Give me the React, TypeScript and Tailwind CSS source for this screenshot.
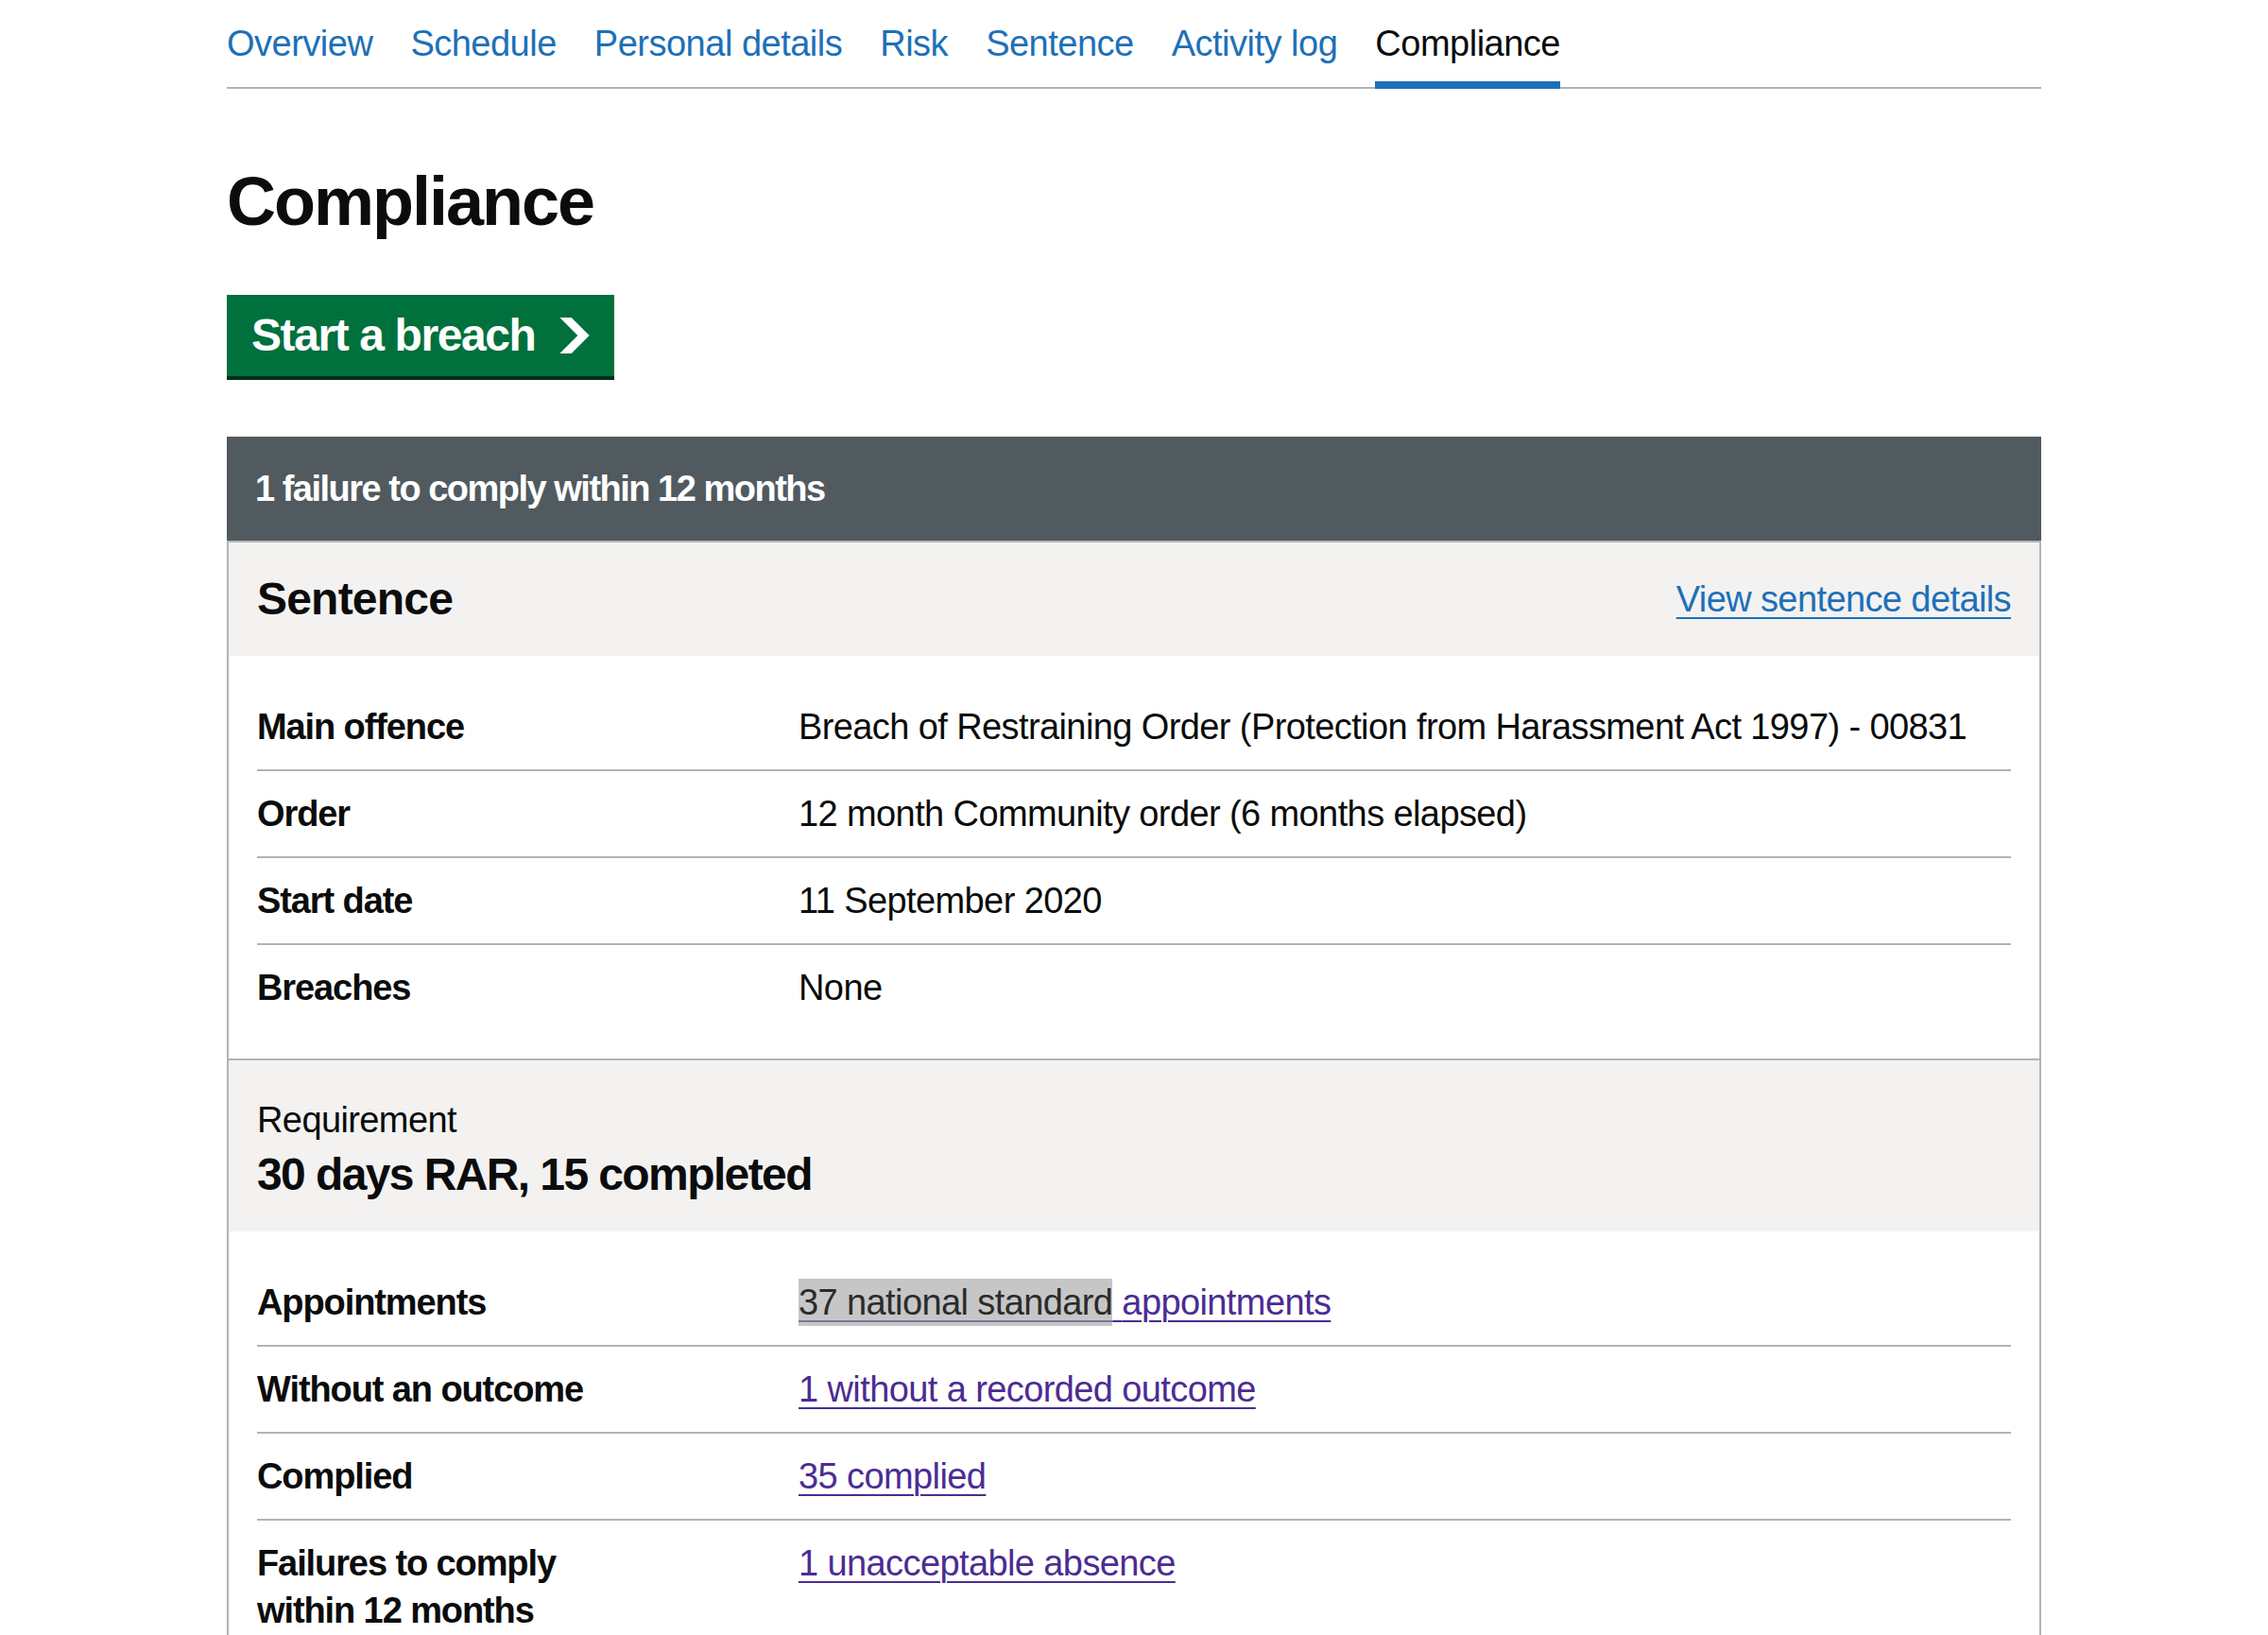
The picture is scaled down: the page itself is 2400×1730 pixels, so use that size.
import React from 'react';

type Row = { key: string; value: React.ReactNode };

const tabs = ['Overview', 'Schedule', 'Personal details', 'Risk', 'Sentence', 'Activity log', 'Compliance'];

const visited = 'text-[#4c2c92] underline decoration-2 underline-offset-[6px]';

function SummaryList({ rows }: { rows: Row[] }) {
  return (
    <dl>
      {rows.map((row, i) => (
        <div
          key={i}
          className={`grid grid-cols-[573px_1fr] py-[20px] ${i < rows.length - 1 ? 'border-b-2 border-[#b1b4b6]' : ''}`}
        >
          <dt className="font-bold tracking-[-1.1px] max-w-[400px]">{row.key}</dt>
          <dd className="tracking-[-0.6px]">{row.value}</dd>
        </div>
      ))}
    </dl>
  );
}

export default function App() {
  const sentenceRows: Row[] = [
    { key: 'Main offence', value: 'Breach of Restraining Order (Protection from Harassment Act 1997) - 00831' },
    { key: 'Order', value: '12 month Community order (6 months elapsed)' },
    { key: 'Start date', value: '11 September 2020' },
    { key: 'Breaches', value: 'None' },
  ];

  const requirementRows: Row[] = [
    {
      key: 'Appointments',
      value: (
        <a href="#" className={visited}>
          <span className="inline-block bg-[#c6c6c6] text-[#2b2b2b] underline decoration-2 underline-offset-[6px] decoration-[#7f74a3]">
            37 national standard
          </span>{' '}
          appointments
        </a>
      ),
    },
    { key: 'Without an outcome', value: <a href="#" className={visited}>1 without a recorded outcome</a> },
    { key: 'Complied', value: <a href="#" className={visited}>35 complied</a> },
    { key: 'Failures to comply within 12 months', value: <a href="#" className={visited}>1 unacceptable absence</a> },
  ];

  return (
    <div className="min-h-screen bg-white text-[#0b0c0c] font-['Liberation_Sans',Arial,sans-serif] text-[38px] leading-[50px]">
      <div className="w-[1920px] mx-auto pb-[80px]">
        {/* Sub navigation */}
        <nav>
          <ul className="flex gap-[40px] border-b-2 border-[#b1b4b6]">
            {tabs.map((tab) => {
              const active = tab === 'Compliance';
              return (
                <li key={tab} className="-mb-[2px]">
                  <a
                    href="#"
                    className={`block pt-[21px] pb-[15px] border-b-[8px] tracking-[-0.5px] ${
                      active ? 'border-[#1d70b8] text-[#0b0c0c]' : 'border-transparent text-[#1d70b8]'
                    }`}
                  >
                    {tab}
                  </a>
                </li>
              );
            })}
          </ul>
        </nav>

        <h1 className="mt-[79px] mb-[59px] text-[72px] leading-[80px] font-bold tracking-[-2px]">Compliance</h1>

        <div>
          <a
            href="#"
            className="inline-flex items-center gap-[25px] bg-[#00703c] text-white pl-[26px] pr-[26px] py-[19px] shadow-[0_4px_0_#002d18]"
          >
            <span className="text-[48px] leading-[48px] font-bold tracking-[-1.4px]">Start a breach</span>
            <svg width="32" height="38" viewBox="0 0 33 40" aria-hidden="true">
              <path fill="currentColor" d="M0 0h13l20 20-20 20H0l20-20z" />
            </svg>
          </a>
        </div>

        {/* Compliance card */}
        <section className="mt-[64px]">
          <div className="bg-[#505a5f] text-white font-bold px-[30px] py-[30px] border-b-2 border-[#b1b4b6] tracking-[-1.5px]">
            1 failure to comply within 12 months
          </div>

          <div className="border-x-2 border-[#b1b4b6]">
            <div className="bg-[#f3f2f1] px-[30px] py-[30px] flex items-center justify-between">
              <h2 className="text-[48px] leading-[60px] font-bold tracking-[-0.8px]">Sentence</h2>
              <a href="#" className="text-[#1d70b8] underline decoration-2 underline-offset-[6px] tracking-[-0.6px]">
                View sentence details
              </a>
            </div>

            <div className="px-[30px] py-[30px]">
              <SummaryList rows={sentenceRows} />
            </div>

            <div className="bg-[#f3f2f1] border-t-2 border-[#b1b4b6] px-[30px] pt-[38px] pb-[30px]">
              <p className="tracking-[-0.6px] mb-[3px]">Requirement</p>
              <h3 className="text-[48px] leading-[60px] font-bold tracking-[-1.6px]">30 days RAR, 15 completed</h3>
            </div>

            <div className="px-[30px] py-[30px]">
              <SummaryList rows={requirementRows} />
            </div>
          </div>
        </section>
      </div>
    </div>
  );
}
